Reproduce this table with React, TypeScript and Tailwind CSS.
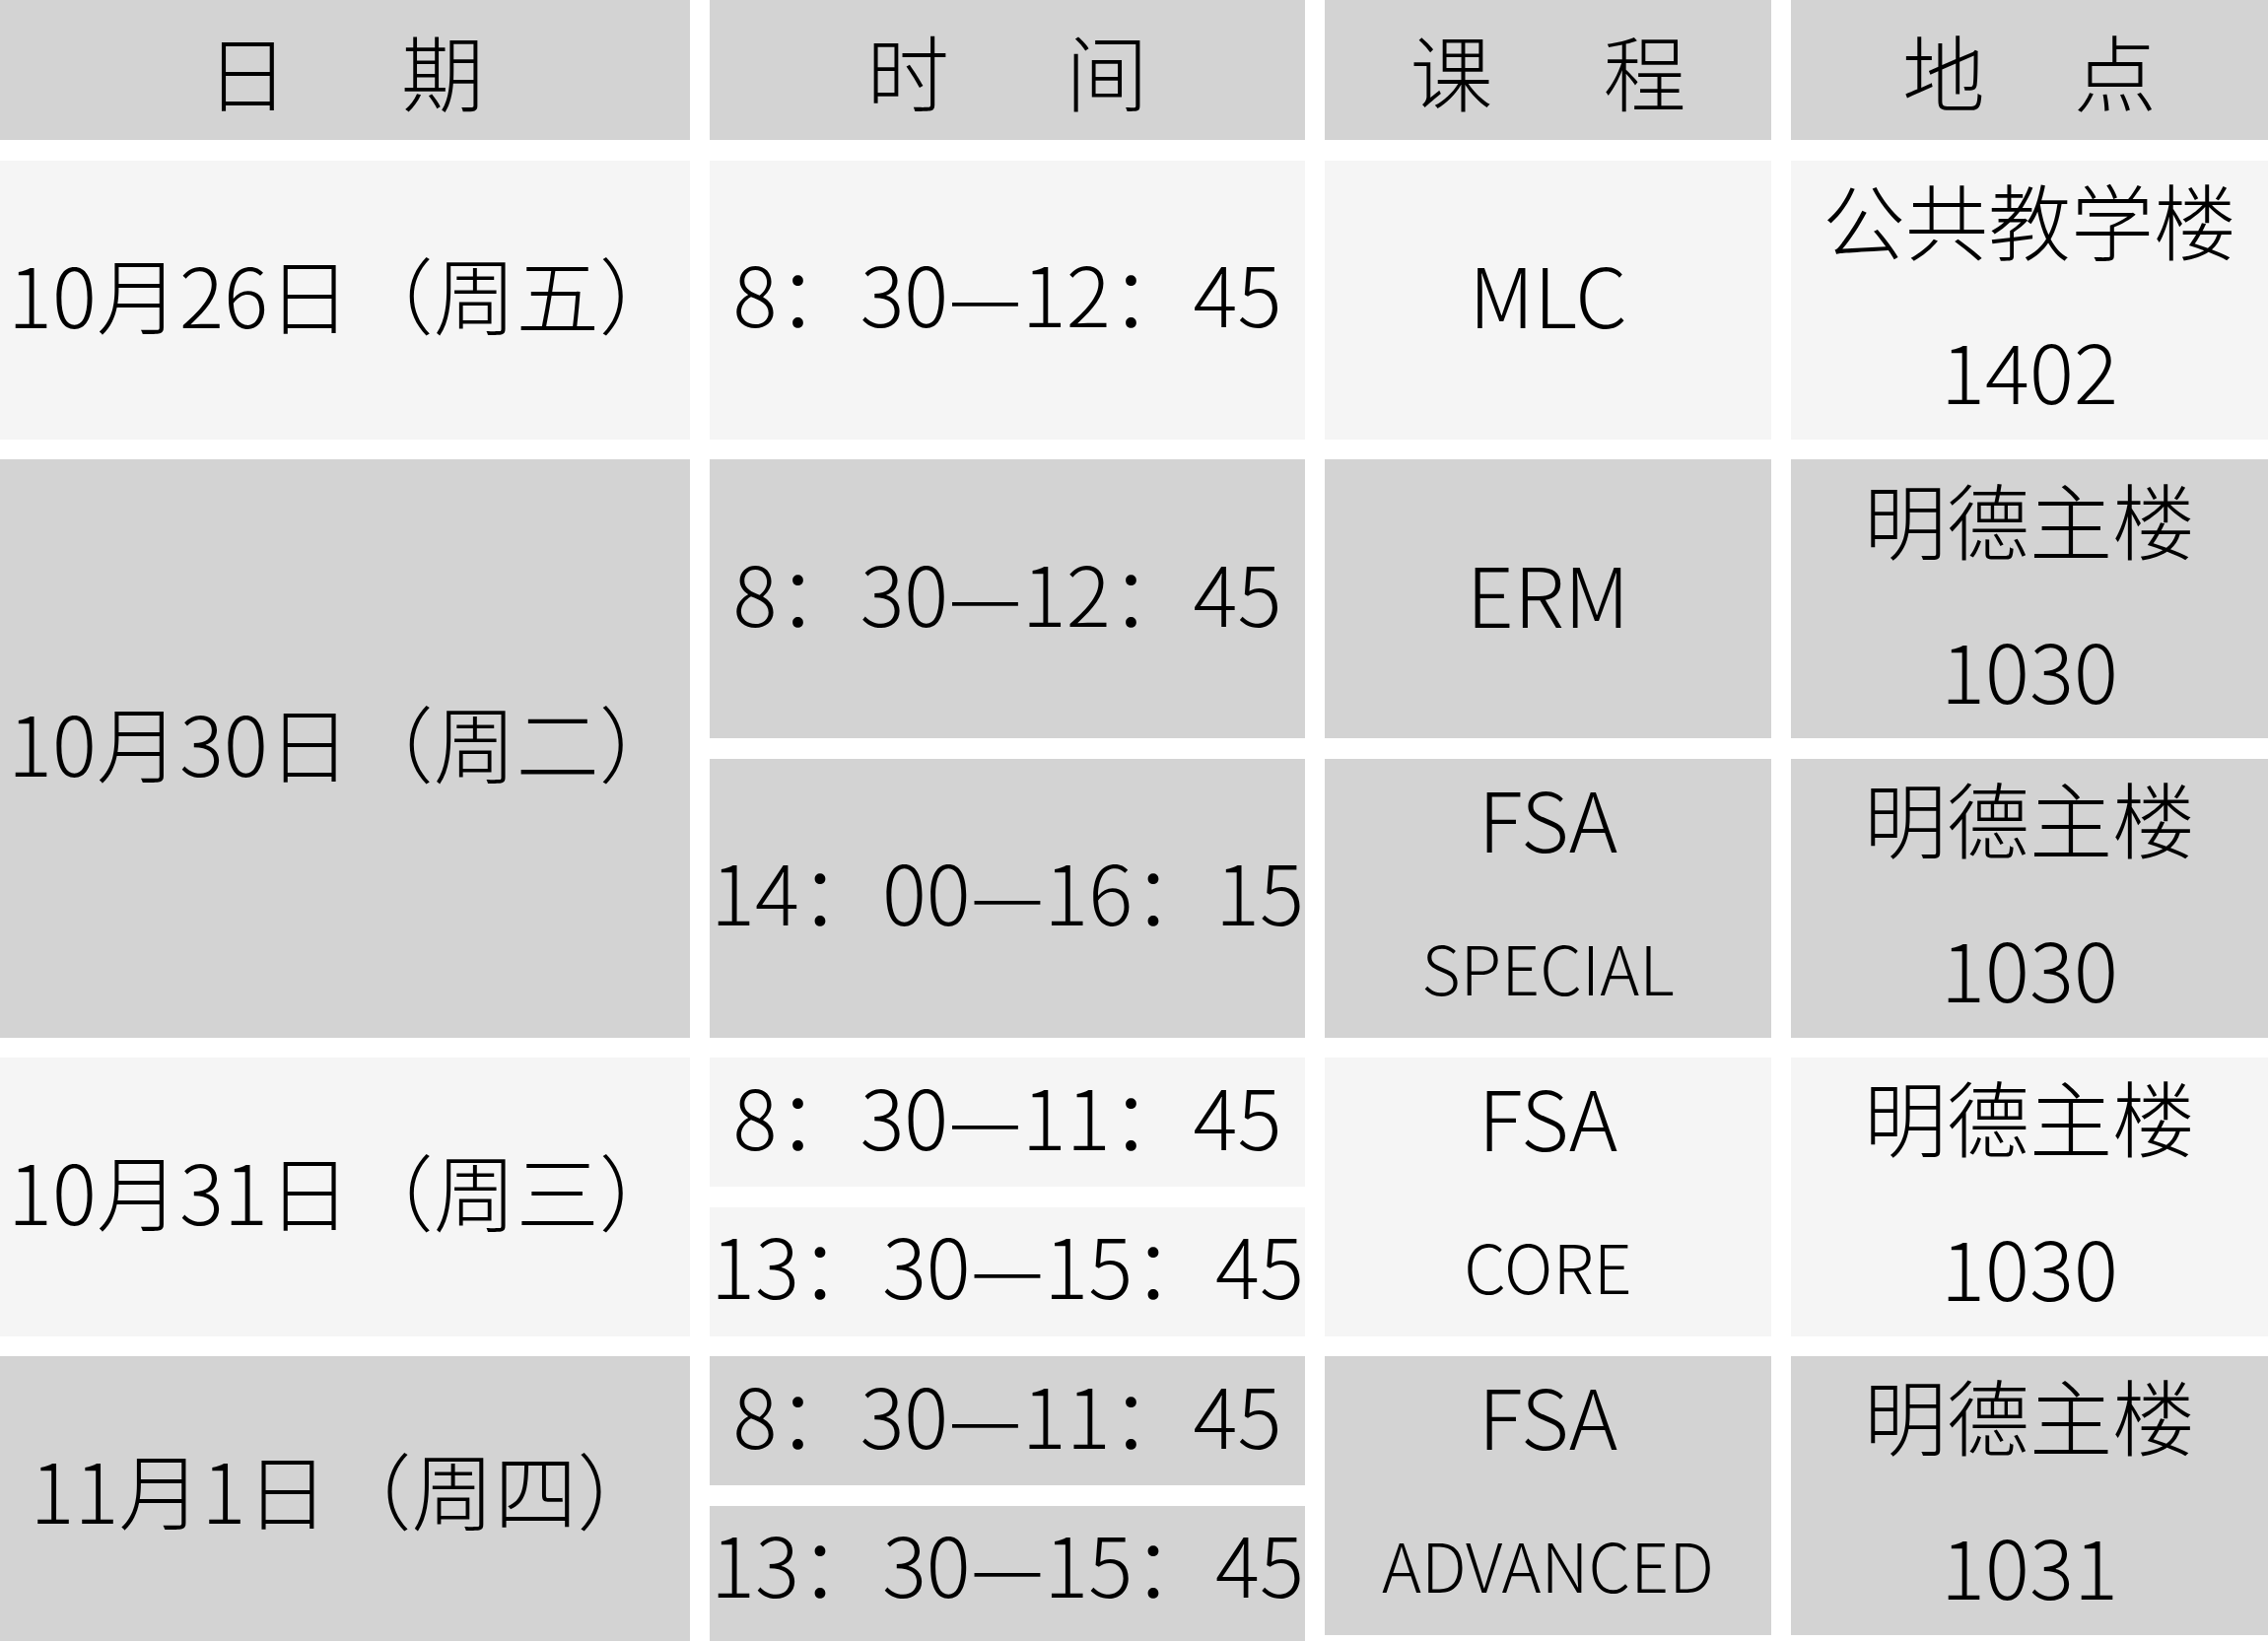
import React from "react";

const GRAY = "bg-[#d3d3d3]";
const LIGHT = "bg-[#f5f5f5]";

function Cell({
  className,
  children,
}: {
  className: string;
  children: React.ReactNode;
}) {
  return (
    <div
      className={
        "flex flex-col items-center justify-center whitespace-nowrap text-black " +
        className
      }
    >
      {children}
    </div>
  );
}

function Head({ className, a, b, gap }: { className: string; a: string; b: string; gap: string }) {
  return (
    <div className={"flex flex-row items-center justify-center bg-[#d3d3d3] text-black " + gap + " " + className}>
      <span>{a}</span>
      <span>{b}</span>
    </div>
  );
}

function Two({ top, bottom, small }: { top: string; bottom: string; small?: boolean }) {
  return (
    <>
      <div className="leading-[152px] text-[84px]">{top}</div>
      <div className={"leading-[152px] " + (small ? "text-[68px]" : "text-[84px]")}>{bottom}</div>
    </>
  );
}

export default function App() {
  return (
    <div className="w-[2301px] h-[1665px] overflow-hidden bg-white font-['Noto_Sans_CJK_SC',sans-serif] font-light">
      <div className="grid grid-cols-[700px_604px_453px_484px] grid-rows-[142px_283px_283px_283px_131px_131px_131px_131px] gap-x-[20px] gap-y-[20.5px] text-[84px]">
        {/* header */}
        <Head className="col-start-1 row-start-1" gap="gap-[114px]" a="日" b="期" />
        <Head className="col-start-2 row-start-1" gap="gap-[118px]" a="时" b="间" />
        <Head className="col-start-3 row-start-1" gap="gap-[112px]" a="课" b="程" />
        <Head className="col-start-4 row-start-1" gap="gap-[90px]" a="地" b="点" />

        {/* row 1 */}
        <Cell className={`${LIGHT} col-start-1 row-start-2 pb-[14px]`}>10月26日（周五）</Cell>
        <Cell className={`${LIGHT} col-start-2 row-start-2 pb-[16px]`}>8：30—12：45</Cell>
        <Cell className={`${LIGHT} col-start-3 row-start-2 pb-[14px]`}>MLC</Cell>
        <Cell className={`${LIGHT} col-start-4 row-start-2 pb-[12px]`}>
          <Two top="公共教学楼" bottom="1402" />
        </Cell>

        {/* row 2 */}
        <Cell className={`${GRAY} col-start-1 row-start-3 row-span-2 pb-[14px]`}>10月30日（周二）</Cell>
        <Cell className={`${GRAY} col-start-2 row-start-3 pb-[16px]`}>8：30—12：45</Cell>
        <Cell className={`${GRAY} col-start-2 row-start-4 pb-[16px]`}>14：00—16：15</Cell>
        <Cell className={`${GRAY} col-start-3 row-start-3 pb-[14px]`}>ERM</Cell>
        <Cell className={`${GRAY} col-start-3 row-start-4 pb-[12px]`}>
          <Two top="FSA" bottom="SPECIAL" small />
        </Cell>
        <Cell className={`${GRAY} col-start-4 row-start-3 pb-[12px]`}>
          <Two top="明德主楼" bottom="1030" />
        </Cell>
        <Cell className={`${GRAY} col-start-4 row-start-4 pb-[12px]`}>
          <Two top="明德主楼" bottom="1030" />
        </Cell>

        {/* row 3 */}
        <Cell className={`${LIGHT} col-start-1 row-start-5 row-span-2 pb-[14px]`}>10月31日（周三）</Cell>
        <Cell className={`${LIGHT} col-start-2 row-start-5 pb-[16px]`}>8：30—11：45</Cell>
        <Cell className={`${LIGHT} col-start-2 row-start-6 pb-[16px]`}>13：30—15：45</Cell>
        <Cell className={`${LIGHT} col-start-3 row-start-5 row-span-2 pb-[12px]`}>
          <Two top="FSA" bottom="CORE" small />
        </Cell>
        <Cell className={`${LIGHT} col-start-4 row-start-5 row-span-2 pb-[12px]`}>
          <Two top="明德主楼" bottom="1030" />
        </Cell>

        {/* row 4 */}
        <Cell className={`${GRAY} col-start-1 row-start-7 row-span-2 mb-[-40px] pb-[54px]`}>11月1日（周四）</Cell>
        <Cell className={`${GRAY} col-start-2 row-start-7 pb-[16px]`}>8：30—11：45</Cell>
        <Cell className={`${GRAY} col-start-2 row-start-8 mb-[-40px] pb-[56px]`}>13：30—15：45</Cell>
        <Cell className={`${GRAY} col-start-3 row-start-7 row-span-2 pb-[12px]`}>
          <Two top="FSA" bottom="ADVANCED" small />
        </Cell>
        <Cell className={`${GRAY} col-start-4 row-start-7 row-span-2 pb-[12px]`}>
          <Two top="明德主楼" bottom="1031" />
        </Cell>
      </div>
    </div>
  );
}
